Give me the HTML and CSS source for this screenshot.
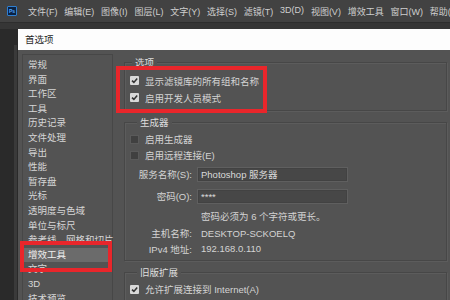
FILE: index.html
```html
<!DOCTYPE html>
<html lang="zh-CN">
<head>
<meta charset="utf-8">
<title>首选项</title>
<link rel="stylesheet" href="styles.css">
</head>
<body>
<div class="menubar">
  <div class="logo"><span>Ps</span></div>
  <nav class="menus">
    <span>文件(F)</span><span>编辑(E)</span><span>图像(I)</span><span>图层(L)</span><span>文字(Y)</span><span>选择(S)</span><span>滤镜(T)</span><span>3D(D)</span><span>视图(V)</span><span>增效工具</span><span>窗口(W)</span><span>帮助(H)</span>
  </nav>
</div>
<div class="optbar"></div>
<div class="workspace">
  <div class="gutter"><div class="gstrip"></div></div>
  <div class="dialog">
    <div class="titlebar">首选项</div>
    <div class="dbody">
      <div class="sidebar">
        <ul class="navlist">
          <li>常规</li>
          <li>界面</li>
          <li>工作区</li>
          <li>工具</li>
          <li>历史记录</li>
          <li>文件处理</li>
          <li>导出</li>
          <li>性能</li>
          <li>暂存盘</li>
          <li>光标</li>
          <li>透明度与色域</li>
          <li>单位与标尺</li>
          <li>参考线、网格和切片</li>
          <li class="sel">增效工具</li>
          <li>文字</li>
          <li>3D</li>
          <li>技术预览</li>
        </ul>
      </div>
      <div class="content">
        <div class="group g1">
          <div class="legend l1">选项</div>
          <div class="row first"><span class="cb on"><svg viewBox="0 0 9 9"><path d="M2 4.6 L3.9 6.4 L7.2 2.6"/></svg></span>显示滤镜库的所有组和名称</div>
          <div class="row"><span class="cb on"><svg viewBox="0 0 9 9"><path d="M2 4.6 L3.9 6.4 L7.2 2.6"/></svg></span>启用开发人员模式</div>
        </div>
        <div class="group g2">
          <div class="legend">生成器</div>
          <div class="row r16 first2"><span class="cb off"></span>启用生成器</div>
          <div class="row r16"><span class="cb off"></span>启用远程连接(E)</div>
          <div class="frow"><span class="flabel">服务名称(S):</span><span class="input">Photoshop 服务器</span></div>
          <div class="frow"><span class="flabel">密码(O):</span><span class="input">****</span></div>
          <div class="trow hint"><span class="flabel"></span><span class="val">密码必须为 6 个字符或更长。</span></div>
          <div class="trow host"><span class="flabel">主机名称:</span><span class="val">DESKTOP-SCKOELQ</span></div>
          <div class="trow ip"><span class="flabel">IPv4 地址:</span><span class="val">192.168.0.110</span></div>
        </div>
        <div class="group g3">
          <div class="legend">旧版扩展</div>
          <div class="row r16 first2"><span class="cb on"><svg viewBox="0 0 9 9"><path d="M2 4.6 L3.9 6.4 L7.2 2.6"/></svg></span>允许扩展连接到 Internet(A)</div>
        </div>
      </div>
    </div>
  </div>
</div>
<div class="mark mark1"></div>
<div class="mark mark2"></div>
</body>
</html>
```
FILE: styles.css
```css
html, body {
  margin: 0;
  padding: 0;
}
body {
  width: 450px;
  height: 300px;
  overflow: hidden;
  position: relative;
  background: #2a2a2a;
  font-family: "Liberation Sans", "Noto Sans CJK SC", sans-serif;
  font-size: 9.5px;
  color: #d4d4d4;
}
.menubar {
  height: 22px;
  background: #424242;
  display: flex;
  align-items: center;
  padding-left: 7px;
  box-sizing: border-box;
  overflow: hidden;
}
.logo {
  width: 10px;
  height: 10px;
  box-sizing: border-box;
  background: #0a2244;
  border: 1px solid #2f7fd0;
  border-radius: 1px;
  display: flex;
  align-items: center;
  justify-content: center;
  flex: none;
}
.logo span {
  font-size: 5px;
  line-height: 5px;
  color: #53a9ff;
  font-weight: bold;
}
.menus {
  display: flex;
  gap: 6.8px;
  margin-left: 11px;
  color: #cfcfcf;
  font-size: 9px;
  white-space: nowrap;
}
.optbar {
  height: 6px;
  background: #363636;
  border-top: 1px solid #2e2e2e;
}
.workspace {
  display: flex;
  height: 271px;
}
.gutter {
  width: 18px;
  flex: none;
  background: #2a2a2a;
  display: flex;
  justify-content: flex-end;
  padding-top: 16px;
  box-sizing: border-box;
}
.gstrip {
  width: 3px;
  margin-right: 1px;
  background: #3a3a3a;
}
.dialog {
  flex: 1;
  background: #535353;
  display: flex;
  flex-direction: column;
}
.titlebar {
  height: 21px;
  line-height: 21px;
  background: #fdfdfd;
  color: #262626;
  padding-left: 7px;
  flex: none;
}
.dbody {
  display: flex;
  padding-top: 4px;
  flex: 1;
}
.sidebar {
  width: 95px;
  flex: none;
  padding-left: 4px;
  box-sizing: border-box;
}
.navlist {
  list-style: none;
  margin: 0;
  padding: 3px 0 0;
  border: 1px solid #474747;
  height: 260px;
  box-sizing: border-box;
}
.navlist li {
  line-height: 14.6px;
  padding-left: 5px;
  white-space: nowrap;
  color: #d6d6d6;
}
.navlist li.sel {
  background: #6b6b6b;
  color: #eeeeee;
}
.content {
  flex: 1;
  padding: 0 3px 0 11px;
}
.group {
  border: 1px solid #474747;
  box-shadow: inset 1px 1px 0 #5c5c5c, 1px 1px 0 #5c5c5c;
  padding: 0 0 4px 5px;
}
.g1 {
  margin-top: 8px;
}
.g2, .g3 {
  margin-top: 11px;
}
.legend {
  width: max-content;
  margin: -7px 0 0 7px;
  padding: 0 3px;
  line-height: 13px;
  background: #535353;
  color: #dedede;
}
.legend.l1 {
  margin-left: 2px;
}
.row {
  display: flex;
  align-items: center;
  height: 17px;
  white-space: nowrap;
}
.row.first {
  margin-top: 3px;
}
.row.r16 {
  height: 16px;
}
.row.first2 {
  margin-top: 2px;
}
.cb {
  width: 9px;
  height: 9px;
  box-sizing: border-box;
  margin-right: 6px;
  flex: none;
  display: block;
}
.cb.on {
  background: #d9d9d9;
  border-radius: 1px;
}
.cb.on svg {
  display: block;
  width: 9px;
  height: 9px;
}
.cb.on path {
  fill: none;
  stroke: #333333;
  stroke-width: 1.6;
}
.cb.off {
  background: #404040;
  border: 1px solid #5a5a5a;
}
.frow {
  display: flex;
  align-items: center;
  height: 22px;
  white-space: nowrap;
}
.flabel {
  width: 62px;
  text-align: right;
  flex: none;
}
.input {
  margin-left: 5px;
  width: 151px;
  height: 15px;
  line-height: 13px;
  box-sizing: border-box;
  background: #474747;
  border: 1px solid #5f5f5f;
  box-shadow: inset 0 0 0 1px #424242;
  padding-left: 3px;
  color: #dadada;
}
.trow {
  display: flex;
  align-items: center;
  white-space: nowrap;
}
.trow.hint { height: 18px; }
.trow.host { height: 16px; }
.trow.ip { height: 15px; }
.val {
  padding-left: 9px;
}
.mark {
  position: absolute;
  border: 4px solid #e9262b;
  box-sizing: border-box;
}
.mark1 {
  left: 116px;
  top: 66px;
  width: 151px;
  height: 47px;
}
.mark2 {
  left: 20px;
  top: 241px;
  width: 92px;
  height: 31px;
}
```
